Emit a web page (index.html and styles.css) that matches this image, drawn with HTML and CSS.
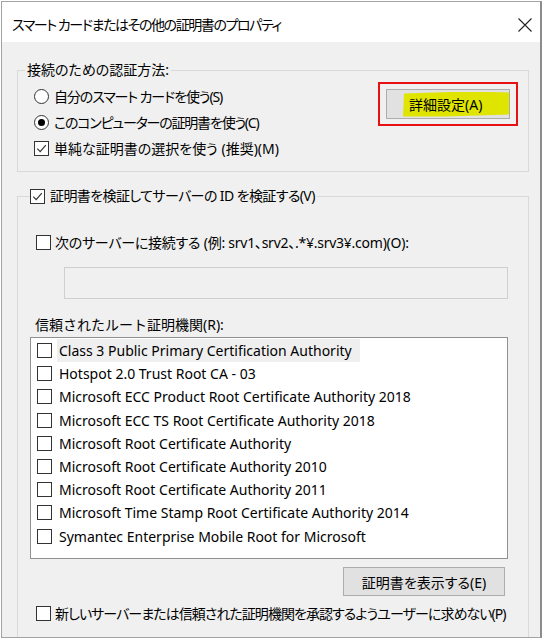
FILE: index.html
```html
<!DOCTYPE html>
<html lang="ja">
<head>
<meta charset="utf-8">
<title>スマート カードまたはその他の証明書のプロパティ</title>
<link rel="stylesheet" href="styles.css">
</head>
<body>
<div class="frame">
  <div class="titlebar">
    <span class="title">スマート カードまたはその他の証明書のプロパティ</span>
    <svg class="close" width="14" height="14" viewBox="0 0 14 14"><path d="M0.5 0.5 L13.5 13.5 M13.5 0.5 L0.5 13.5" stroke="#222" stroke-width="1.1" fill="none"/></svg>
  </div>
  <div class="content">
    <fieldset class="group g1">
      <legend class="legend1">接続のための認証方法:</legend>
      <div class="g1-body">
        <div class="options">
          <div class="opt"><span class="radio"></span><span class="t-own">自分のスマート カードを使う(S)</span></div>
          <div class="opt"><span class="radio on"></span><span class="t-pc">このコンピューターの証明書を使う(C)</span></div>
          <div class="opt"><span class="cb"><svg viewBox="0 0 13 13" width="13" height="13"><path d="M2.3 6.6 L5.2 9.6 L10.8 3.2" stroke="#333" stroke-width="1.2" fill="none"/></svg></span><span>単純な証明書の選択を使う (推奨)(M)</span></div>
        </div>
        <div class="redbox"><button class="btn adv"><span class="hl">詳細設定(A)</span></button></div>
      </div>
    </fieldset>

    <fieldset class="group g2">
      <legend class="legend2"><span class="cb"><svg viewBox="0 0 13 13" width="13" height="13"><path d="M2.3 6.6 L5.2 9.6 L10.8 3.2" stroke="#333" stroke-width="1.2" fill="none"/></svg></span><span class="t-verify">証明書を検証してサーバーの ID を検証する(V)</span></legend>
      <div class="opt row-server"><span class="cb"></span><span class="t-server">次のサーバーに接続する (例: srv1、srv2、.*¥.srv3¥.com)(O):</span></div>
      <div class="textbox"></div>
      <div class="list-label">信頼されたルート証明機関(R):</div>
      <div class="listbox">
        <div class="item"><span class="cb"></span><span class="itext focus">Class 3 Public Primary Certification Authority</span></div>
        <div class="item"><span class="cb"></span><span class="itext">Hotspot 2.0 Trust Root CA - 03</span></div>
        <div class="item"><span class="cb"></span><span class="itext">Microsoft ECC Product Root Certificate Authority 2018</span></div>
        <div class="item"><span class="cb"></span><span class="itext">Microsoft ECC TS Root Certificate Authority 2018</span></div>
        <div class="item"><span class="cb"></span><span class="itext">Microsoft Root Certificate Authority</span></div>
        <div class="item"><span class="cb"></span><span class="itext">Microsoft Root Certificate Authority 2010</span></div>
        <div class="item"><span class="cb"></span><span class="itext">Microsoft Root Certificate Authority 2011</span></div>
        <div class="item"><span class="cb"></span><span class="itext">Microsoft Time Stamp Root Certificate Authority 2014</span></div>
        <div class="item"><span class="cb"></span><span class="itext">Symantec Enterprise Mobile Root for Microsoft</span></div>
      </div>
      <button class="btn view">証明書を表示する(E)</button>
      <div class="opt row-prompt"><span class="cb"></span><span class="t-prompt">新しいサーバーまたは信頼された証明機関を承認するようユーザーに求めない(P)</span></div>
    </fieldset>
  </div>
</div>
</body>
</html>
```

FILE: styles.css
```css
* { box-sizing: border-box; }

html, body {
  margin: 0;
  padding: 0;
  background: #ffffff;
}

body {
  font-family: "Noto Sans", "Noto Sans CJK JP", sans-serif;
  font-size: 14px;
  color: #000;
  font-feature-settings: "palt";
}

.frame {
  margin: 1px 0 0 1px;
  width: 541px;
  height: 637px;
  border: 1px solid #a3a3a3;
  border-right: 2px solid #8c8c8c;
  background: #f0f0f0;
  overflow: hidden;
}

.titlebar {
  height: 40px;
  background: #ffffff;
  display: flex;
  align-items: center;
  justify-content: space-between;
  padding: 6px 8px 0 10px;
}

.title {
  line-height: 20px;
  white-space: nowrap;
  letter-spacing: -1.4px;
}

.close { display: block; }

.content {
  padding: 0 11px 0 15px;
}

.group {
  margin: 0;
  border: 1px solid #d9d9d9;
  min-width: 0;
}

.g1 {
  margin-top: 18px;
  padding: 3px 10px 10px 16px;
}

.legend1 {
  padding: 0 2px;
  margin-left: -9px;
  line-height: 20px;
  height: 20px;
}

.g1-body {
  display: flex;
  justify-content: space-between;
  align-items: flex-start;
}

.opt {
  display: flex;
  align-items: center;
  gap: 5px;
  height: 26px;
  white-space: nowrap;
}

.t-own { letter-spacing: -1.1px; }
.t-pc { letter-spacing: -1.2px; }
.t-verify { letter-spacing: -0.6px; }
.t-server { letter-spacing: -0.25px; }
.t-prompt { letter-spacing: -0.95px; }

.radio {
  width: 15px;
  height: 15px;
  border: 1px solid #333;
  border-radius: 50%;
  background: #fff;
  display: flex;
  align-items: center;
  justify-content: center;
  flex: none;
}

.radio.on::after {
  content: "";
  width: 7px;
  height: 7px;
  border-radius: 50%;
  background: #000;
}

.cb {
  width: 15px;
  height: 15px;
  border: 1px solid #333;
  background: #fff;
  flex: none;
  display: flex;
}

.cb svg { display: block; }

.redbox {
  margin-top: -1px;
  border: 2px solid #e81010;
  padding: 5px 6px;
}

.btn {
  font: inherit;
  font-feature-settings: "palt";
  color: #000;
  background: #e1e1e1;
  border: 1px solid #adadad;
  border-radius: 0;
  margin: 0;
  display: flex;
  align-items: center;
}

.adv {
  width: 124px;
  height: 30px;
  padding: 0 0 0 16px;
}

.hl {
  flex: none;
  width: 106px;
  background: #dfe500;
  height: 25px;
  line-height: 25px;
  padding: 0 0 0 6px;
  text-align: left;
  white-space: nowrap;
  clip-path: polygon(1px 2px, 60% 0, 100% 1px, 100% 92%, 40% 100%, 0 100%);
}

.g2 {
  margin-top: 14px;
  padding: 25px 0 30px 18px;
}

.legend2 {
  display: flex;
  align-items: center;
  gap: 5px;
  padding: 0 2px 0 0;
  margin-left: -6px;
  height: 20px;
  line-height: 20px;
  white-space: nowrap;
}

.row-server {
  height: 22px;
  gap: 4px;
}

.textbox {
  margin: 14px 0 0 28px;
  width: 444px;
  height: 32px;
  border: 1px solid #cfcfcf;
  background: #f0f0f0;
}

.list-label {
  margin: 16px 0 0 -1px;
  height: 20px;
  line-height: 20px;
  font-feature-settings: normal;
}

.listbox {
  margin: 2px 0 0 -6px;
  width: 478px;
  height: 222px;
  border: 1px solid #8f9093;
  background: #fff;
  padding: 1px 0 0 6px;
}

.item {
  display: flex;
  align-items: center;
  height: 23.2px;
  white-space: nowrap;
}

.itext {
  margin-left: 5px;
  padding: 0 8px 0 2px;
  line-height: 23px;
}

.itext.focus {
  background: #efefef;
}

.view {
  margin: 8px 0 0 307px;
  width: 162px;
  height: 29px;
  padding: 0;
  justify-content: center;
}

.row-prompt {
  margin-top: 7px;
  height: 20px;
  gap: 4px;
}
```
